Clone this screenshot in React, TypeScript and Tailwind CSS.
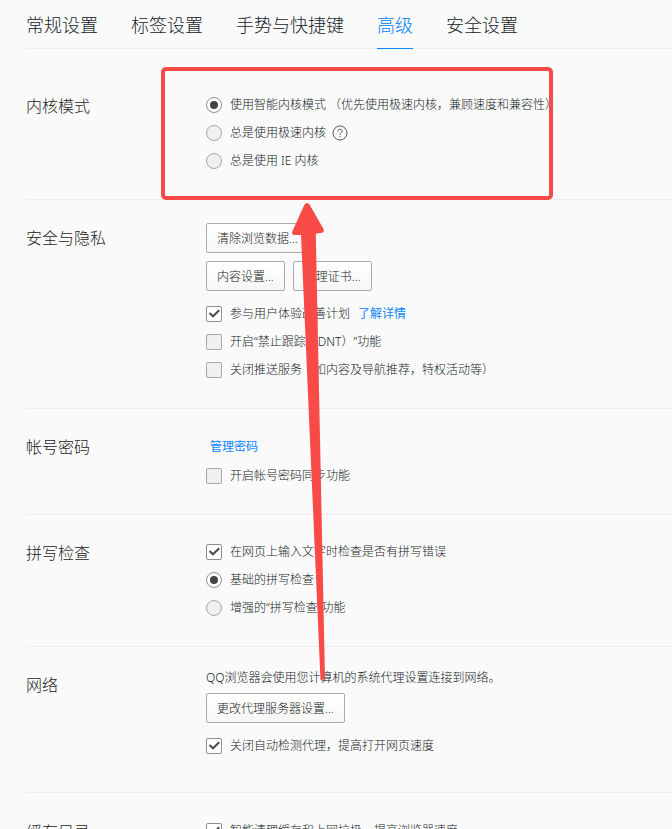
import React, { useState } from 'react';

const tabs = ['常规设置', '标签设置', '手势与快捷键', '高级', '安全设置'];

interface SectionProps {
  title: string;
  className?: string;
  children: React.ReactNode;
}

const Section = ({ title, className = 'pt-[23px] pb-6', children }: SectionProps) => (
  <section className={`flex border-b border-[#ededed] ${className}`}>
    <h2 className="w-[180px] shrink-0 text-base leading-[30px] text-[#222]">{title}</h2>
    <div className="min-w-0 flex-1">{children}</div>
  </section>
);

interface OptionProps {
  label: string;
  checked: boolean;
  onChange: () => void;
  children?: React.ReactNode;
}

const Checkbox = ({ label, checked, onChange, children }: OptionProps) => (
  <div className="flex h-7 items-center gap-2">
    <label className="flex items-center gap-2 whitespace-nowrap">
      <span className="grid h-4 w-4 shrink-0">
        <input
          type="checkbox"
          checked={checked}
          onChange={onChange}
          className="col-start-1 row-start-1 h-4 w-4 appearance-none rounded-xs border border-[#a8a8a8] bg-[#f0f0f0] checked:border-[#8e8e8e] checked:bg-white"
        />
        {checked && (
          <svg viewBox="0 0 16 16" className="pointer-events-none col-start-1 row-start-1 h-4 w-4" fill="none" stroke="#4a4a4a" strokeWidth="2">
            <path d="M3.5 7 L7 10.3 L13.2 4.3" />
          </svg>
        )}
      </span>
      {label}
    </label>
    {children}
  </div>
);

const Radio = ({ name, label, checked, onChange, children }: OptionProps & { name: string }) => (
  <div className="flex h-7 items-center gap-1.5">
    <label className="flex items-center gap-2 whitespace-nowrap">
      <span className="grid h-4 w-4 shrink-0 place-items-center">
        <input
          type="radio"
          name={name}
          checked={checked}
          onChange={onChange}
          className="col-start-1 row-start-1 h-4 w-4 appearance-none rounded-full border border-[#a8a8a8] bg-[#f0f0f0] checked:border-[#8e8e8e] checked:bg-white"
        />
        {checked && <span className="pointer-events-none col-start-1 row-start-1 h-2 w-2 rounded-full bg-[#444]" />}
      </span>
      {label}
    </label>
    {children}
  </div>
);

const Button = ({ children }: { children: React.ReactNode }) => (
  <button
    type="button"
    className="h-[30px] rounded-xs border border-[#ababab] bg-linear-to-b from-white to-[#f6f6f6] px-2.5 pt-0.5 whitespace-nowrap text-[#222]"
  >
    {children}
  </button>
);

const App = () => {
  const [activeTab, setActiveTab] = useState('高级');
  const [kernel, setKernel] = useState('smart');
  const [spelling, setSpelling] = useState('basic');
  const [options, setOptions] = useState({
    improve: true,
    dnt: false,
    push: false,
    sync: false,
    spellcheck: true,
    proxy: true,
    cache: true,
  });

  const toggle = (key: keyof typeof options) => setOptions({ ...options, [key]: !options[key] });

  return (
    <div className="relative h-screen overflow-hidden bg-[#fafafa] pl-[26px] font-['Noto_Sans','Noto_Sans_CJK_SC',sans-serif] text-xs font-light text-[#161d28] [text-spacing-trim:space-all]">
      {/* Tabs */}
      <nav className="flex h-[49px] gap-[33px] border-b border-[#ededed] text-lg">
        {tabs.map((tab) => (
          <button
            key={tab}
            type="button"
            onClick={() => setActiveTab(tab)}
            className={`-mb-px h-[49px] border-b pt-0.5 whitespace-nowrap
              ${activeTab === tab ? 'border-[#0a85ff] text-[#0080ff]' : 'border-transparent'}`}
          >
            {tab}
          </button>
        ))}
      </nav>

      <Section title="内核模式" className="pt-[42px] pb-6">
        <Radio
          name="kernel"
          label="使用智能内核模式 （优先使用极速内核，兼顾速度和兼容性）"
          checked={kernel === 'smart'}
          onChange={() => setKernel('smart')}
        />
        <Radio name="kernel" label="总是使用极速内核" checked={kernel === 'fast'} onChange={() => setKernel('fast')}>
          <button type="button" aria-label="帮助">
            <svg viewBox="0 0 16 16" className="h-4 w-4" fill="none" stroke="#555">
              <circle cx="8" cy="8" r="7" />
              <path d="M5.9 6.5 C5.9 3.6 10.2 3.7 10.2 6.2 C10.2 7.8 8 7.9 8 9.9 M8 11 V12.2" />
            </svg>
          </button>
        </Radio>
        <Radio name="kernel" label="总是使用 IE 内核" checked={kernel === 'ie'} onChange={() => setKernel('ie')} />
      </Section>

      <Section title="安全与隐私">
        <div className="mb-[9px] flex flex-col gap-2">
          <div className="flex">
            <Button>清除浏览数据...</Button>
          </div>
          <div className="flex gap-2">
            <Button>内容设置...</Button>
            <Button>管理证书...</Button>
          </div>
        </div>
        <Checkbox label="参与用户体验改善计划" checked={options.improve} onChange={() => toggle('improve')}>
          <a href="#improve" className="font-normal text-[#0a85ff]">了解详情</a>
        </Checkbox>
        <Checkbox label="开启“禁止跟踪（DNT）”功能" checked={options.dnt} onChange={() => toggle('dnt')} />
        <Checkbox
          label="关闭推送服务（如内容及导航推荐，特权活动等）"
          checked={options.push}
          onChange={() => toggle('push')}
        />
      </Section>

      <Section title="帐号密码">
        <a href="#passwords" className="block px-1 leading-[30px] font-normal text-[#0a85ff]">管理密码</a>
        <Checkbox label="开启帐号密码同步功能" checked={options.sync} onChange={() => toggle('sync')} />
      </Section>

      <Section title="拼写检查">
        <Checkbox
          label="在网页上输入文字时检查是否有拼写错误"
          checked={options.spellcheck}
          onChange={() => toggle('spellcheck')}
        />
        <Radio name="spelling" label="基础的拼写检查" checked={spelling === 'basic'} onChange={() => setSpelling('basic')} />
        <Radio
          name="spelling"
          label="增强的“拼写检查”功能"
          checked={spelling === 'enhanced'}
          onChange={() => setSpelling('enhanced')}
        />
      </Section>

      <Section title="网络" className="pt-[23px] pb-8">
        <p className="pb-[7px] leading-4">QQ浏览器会使用您计算机的系统代理设置连接到网络。</p>
        <div className="mb-[9px] flex">
          <Button>更改代理服务器设置...</Button>
        </div>
        <Checkbox label="关闭自动检测代理，提高打开网页速度" checked={options.proxy} onChange={() => toggle('proxy')} />
      </Section>

      <Section title="缓存目录" className="pt-6 pb-6">
        <Checkbox label="智能清理缓存和上网垃圾，提高浏览器速度" checked={options.cache} onChange={() => toggle('cache')} />
      </Section>

      {/* Highlight box and arrow */}
      <div className="pointer-events-none absolute top-[67px] left-[161px] h-[133px] w-[392px] rounded-[5px] border-4 border-[#f84b47]" />
      <svg viewBox="0 0 40 482" className="pointer-events-none absolute top-[200px] left-[290px] h-[482px] w-10" fill="#f84b47">
        <path d="M14.5 4.5 Q17 1.5 19.5 4.5 L33.5 29 Q35 32.5 31 33 L25.8 33.5 L35 479.5 L30.5 480 L11 35 L5 35 Q1 35 2.5 31 Z" />
      </svg>
    </div>
  );
};

export default App;
